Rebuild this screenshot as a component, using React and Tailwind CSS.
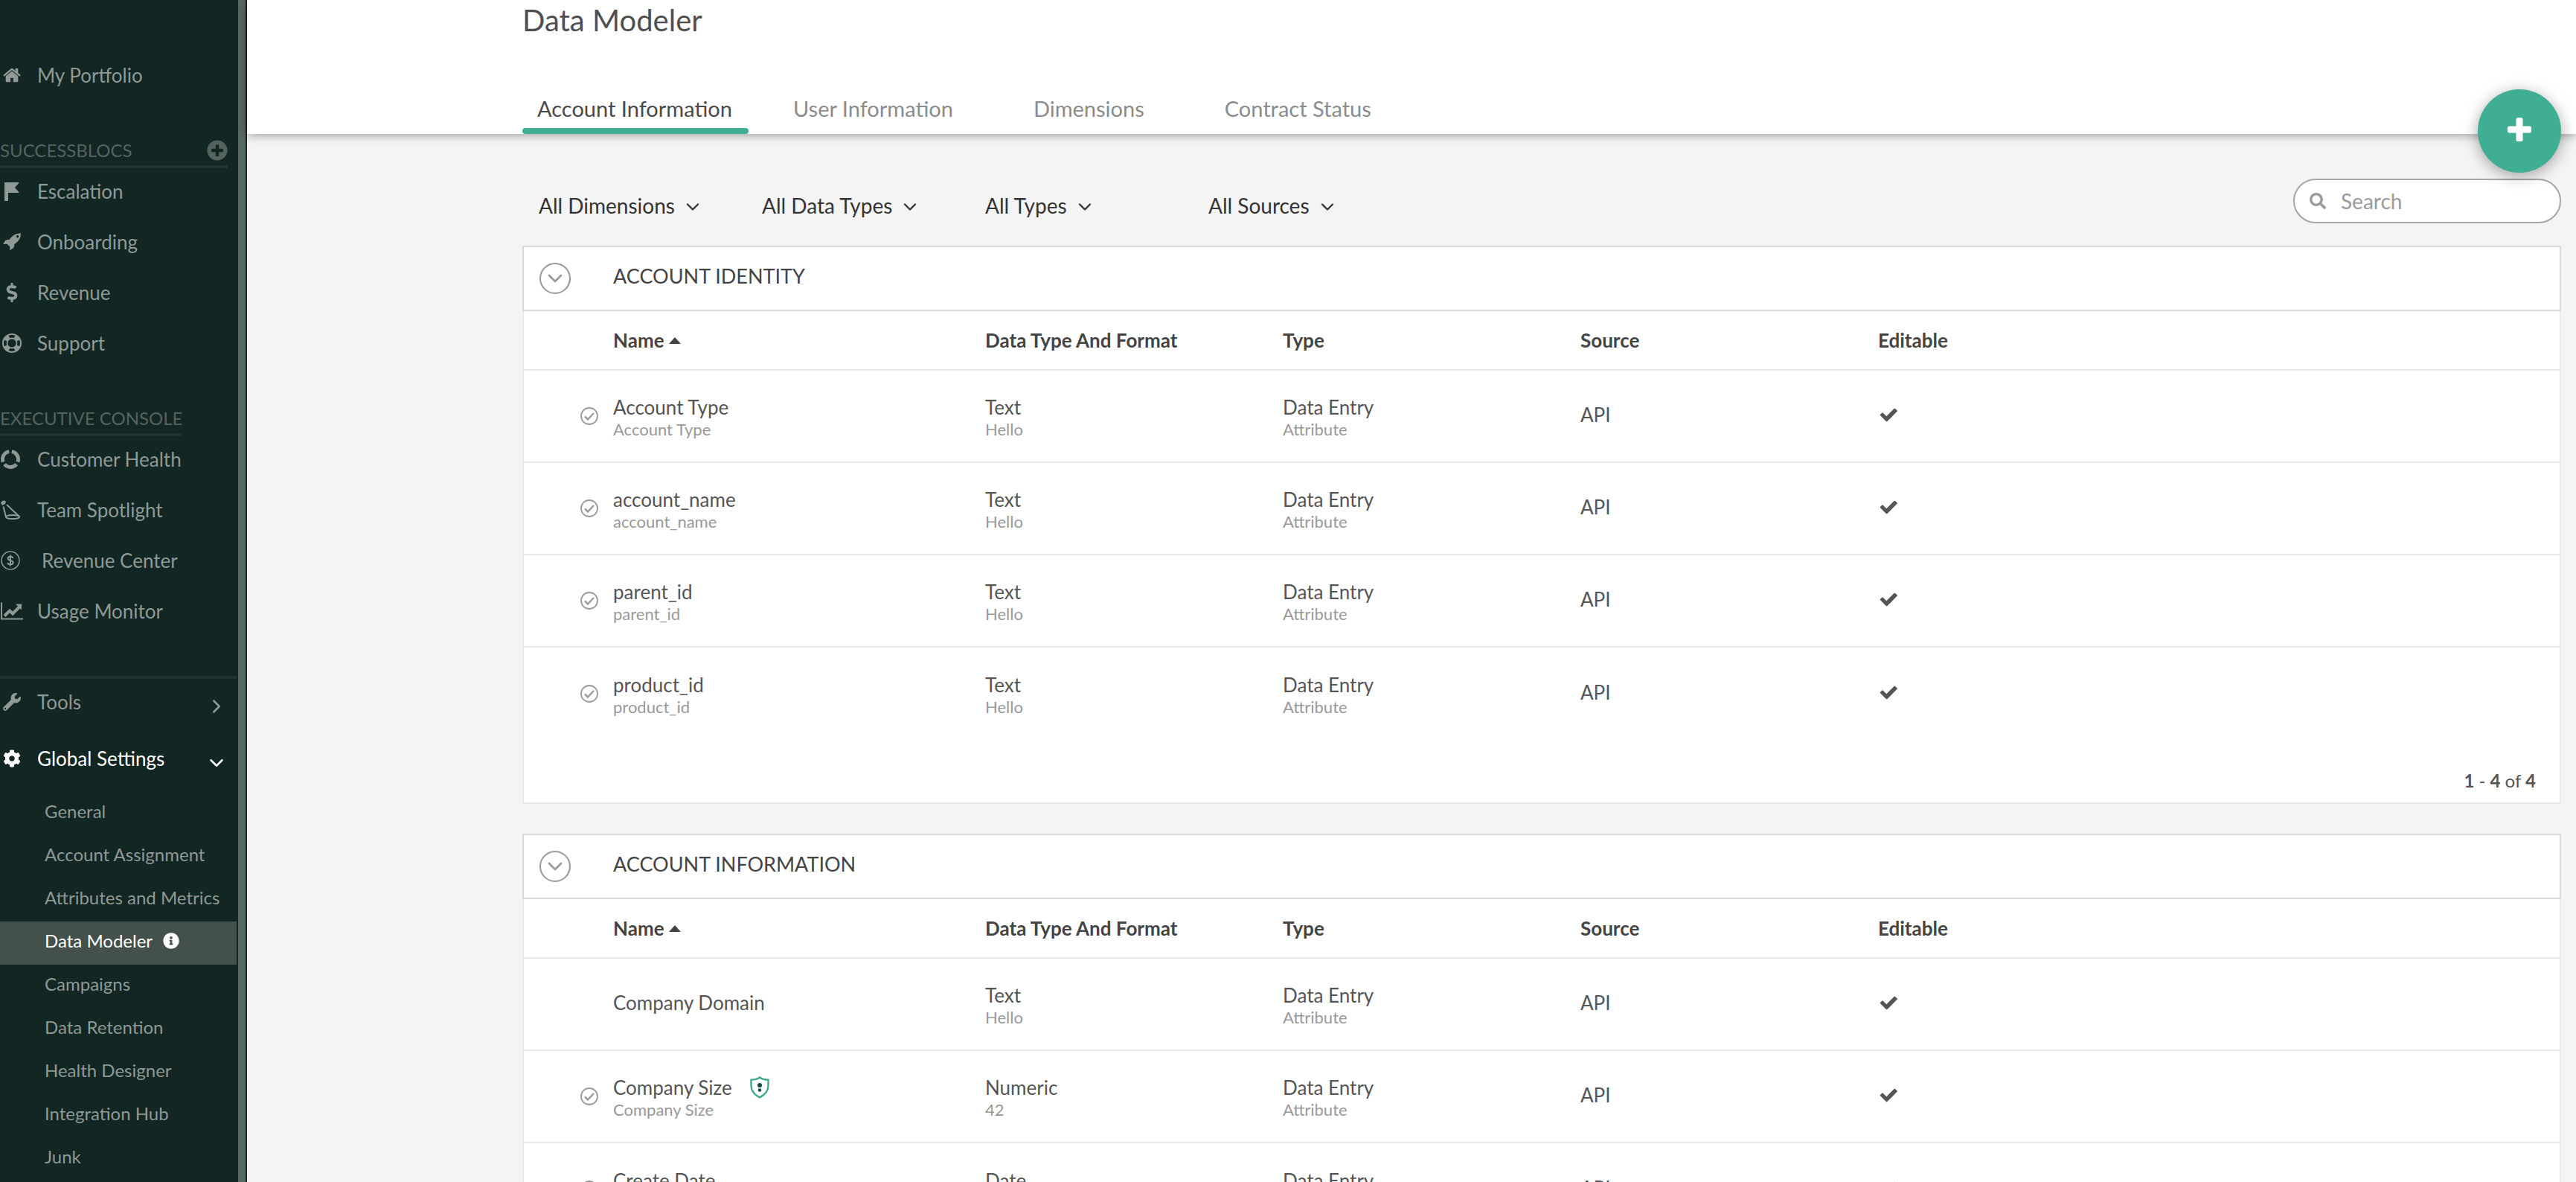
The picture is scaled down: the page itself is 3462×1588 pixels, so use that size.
import { FaDollarSign, FaWrench, FaCog, FaInfoCircle, FaPlusCircle, FaSearch } from 'react-icons/fa';
import { FiChevronDown, FiChevronRight } from 'react-icons/fi';

const HomeIcon = ({ className }) => (
    <svg viewBox="0 0 1664 1792" fill="currentColor" className={className}>
        <path d="M1408 992v480q0 26-19 45t-45 19h-384v-384h-256v384h-384q-26 0-45-19t-19-45v-480q0-1 .5-3t.5-3l575-474 575 474q1 2 1 6zm223-69l-62 74q-8 9-21 11h-3q-13 0-21-7l-692-577-692 577q-12 8-24 7-13-2-21-11l-62-74q-8-10-7-23.5t11-21.5l719-599q32-26 76-26t76 26l244 204v-195q0-14 9-23t23-9h192q14 0 23 9t9 23v408l219 182q10 8 11 21.5t-7 23.5z" />
    </svg>
);

const FlagIcon = ({ className }) => (
    <svg viewBox="0 0 24 26" fill="currentColor" className={className}>
        <path d="M2 1h20l-6 7 6 7H7v11H2z" />
    </svg>
);

const RocketIcon = ({ className }) => (
    <svg viewBox="0 0 24 24" fill="currentColor" className={className}>
        <path fillRule="evenodd" d="M24 .5C17 .3 12.500 3.500 8.500 9 6 8.800 4 9.300 2.800 10.500L0 15.300c2-.8 4-.8 5.800-.3.900 1 1.800 2 3 2.800.7 1.700.8 3.300.2 5.700l4.700-3c1.300-1.200 1.700-3 1.500-5.300C20.800 11.500 24 7.500 24 .5zM19.500 3a1.700 1.700 0 1 1 0 3.400 1.700 1.700 0 0 1 0-3.400z" />
    </svg>
);

const SupportIcon = ({ className }) => (
    <svg viewBox="0 0 26 26" fill="none" stroke="currentColor" className={className}>
        <circle cx="13" cy="13" r="12" strokeWidth="2" />
        <circle cx="13" cy="13" r="6.500" strokeWidth="1.800" />
        <circle cx="13" cy="13" r="9.200" strokeWidth="5" pathLength="360" strokeDasharray="44 46" transform="rotate(23 13 13)" />
    </svg>
);

const HealthIcon = ({ className }) => (
    <svg viewBox="0 0 26 26" fill="none" stroke="currentColor" strokeWidth="5" className={className}>
        <circle cx="13" cy="13" r="10.5" pathLength="360" strokeDasharray="100 20" transform="rotate(-80 13 13)" />
    </svg>
);

const SpotlightIcon = ({ className }) => (
    <svg viewBox="0 0 26 26" fill="none" stroke="currentColor" strokeWidth="2" className={className}>
        <path d="M0 4a4 4 0 0 1 7-2l-1 3-4 2z" fill="currentColor" stroke="none" />
        <path d="M3.5 8.5l3.5 14M8 6l17 16" />
        <ellipse cx="16" cy="22.5" rx="9" ry="2.6" />
    </svg>
);

const RevenueIcon = ({ className }) => (
    <svg viewBox="0 0 26 26" fill="none" stroke="currentColor" className={className}>
        <circle cx="13" cy="13" r="12" strokeWidth="1.6" />
        <path d="M16.5 9.8c-.5-1.300-1.800-2-3.500-2-2 0-3.400.9-3.400 2.500 0 3.600 7 1.700 7 5.400 0 1.600-1.500 2.600-3.600 2.600-1.900 0-3.200-.8-3.700-2.200M13 5.500v15" strokeWidth="2" />
    </svg>
);

const UsageIcon = ({ className }) => (
    <svg viewBox="0 0 30 23" fill="none" stroke="currentColor" className={className}>
        <path d="M1 0v22h29" strokeWidth="2" />
        <path d="M5 18l7-7 4 4 9-9" strokeWidth="4" />
        <path d="M20 2h8v8z" fill="currentColor" stroke="none" />
    </svg>
);

const PlusIcon = ({ className }) => (
    <svg viewBox="0 0 32 32" fill="currentColor" className={className}>
        <rect x="11.5" width="9" height="32" rx="2.5" />
        <rect y="11.5" width="32" height="9" rx="2.5" />
    </svg>
);

const CheckIcon = ({ className }) => (
    <svg viewBox="0 0 1792 1792" fill="currentColor" className={className}>
        <path d="M1671 566q0 28-20 48l-724 724-136 136q-20 20-48 20t-48-20l-136-136-362-362q-20-20-20-48t20-48l136-136q20-20 48-20t48 20l294 295 656-657q20-20 48-20t48 20l136 136q20 20 20 48z" />
    </svg>
);

const CheckCircleIcon = ({ className }) => (
    <svg viewBox="0 0 24 24" fill="none" stroke="currentColor" className={className}>
        <circle cx="12" cy="12" r="11" strokeWidth="1.8" />
        <path d="M6 12.500l4 4 8-8.500" strokeWidth="2.500" />
    </svg>
);

const ShieldIcon = ({ className }) => (
    <svg viewBox="0 0 26 30" fill="none" className={className}>
        <path d="M13 1.500c3 2.300 6.500 3.200 11.500 3.200v7.300c0 7.500-4.500 13-11.500 16.300C6 25 1.500 19.500 1.500 12V4.700C6.500 4.700 10 3.800 13 1.500z" stroke="#3fa98b" strokeWidth="2.400" />
        <circle cx="13" cy="12" r="3" fill="#1c4a40" />
        <circle cx="13" cy="18.500" r="2.300" fill="#1c4a40" />
    </svg>
);

const successblocs = [
    { label: 'Escalation', icon: FlagIcon, size: 'w-6 h-6.5' },
    { label: 'Onboarding', icon: RocketIcon, size: 'w-6 h-6' },
    { label: 'Revenue', icon: FaDollarSign, size: 'w-6 h-6.5' },
    { label: 'Support', icon: SupportIcon, size: 'w-6.5 h-6.5' },
];

const executive = [
    { label: 'Customer Health', icon: HealthIcon, size: 'w-6.5 h-6.5 mr-1' },
    { label: 'Team Spotlight', icon: SpotlightIcon, size: 'w-6.5 h-6.5 mr-1' },
    { label: 'Revenue Center', icon: RevenueIcon, size: 'w-6.5 h-6.5 mr-1', indent: true },
    { label: 'Usage Monitor', icon: UsageIcon, size: 'w-[30px] h-6' },
];

const settings = ['General', 'Account Assignment', 'Attributes and Metrics', 'Data Modeler', 'Campaigns', 'Data Retention', 'Health Designer', 'Integration Hub', 'Junk'];

const tabs = ['Account Information', 'User Information', 'Dimensions', 'Contract Status'];

const filters = ['All Dimensions', 'All Data Types', 'All Types', 'All Sources'];

const identityRows = [
    { name: 'Account Type', sub: 'Account Type', format: 'Text', sample: 'Hello' },
    { name: 'account_name', sub: 'account_name', format: 'Text', sample: 'Hello' },
    { name: 'parent_id', sub: 'parent_id', format: 'Text', sample: 'Hello' },
    { name: 'product_id', sub: 'product_id', format: 'Text', sample: 'Hello' },
];

const informationRows = [
    { name: 'Company Domain', format: 'Text', sample: 'Hello' },
    { name: 'Company Size', sub: 'Company Size', format: 'Numeric', sample: '42', secure: true },
    { name: 'Create Date', sub: 'Create Date', format: 'Date', sample: '01/01/2020' },
];

const NavItem = ({ item }) => {
    const Icon = item.icon;
    return (
        <a href="#" className="flex items-center h-8 text-[26px] leading-8">
            <span className={`flex justify-center w-8 shrink-0 ${item.indent ? 'mr-6' : 'mr-4.5'}`}>
                <Icon className={item.size} />
            </span>
            {item.label}
        </a>
    );
};

const Sidebar = () => (
    <aside className="w-[332px] shrink-0 bg-[#122623] border-r-2 border-[#122623] text-[#8f9996]">
        <nav className="min-h-full border-r-10 border-[#5a6865] pt-[85px]">
            <NavItem item={{ label: 'My Portfolio', icon: HomeIcon, size: 'w-6 h-6.5' }} />

            <div className="mt-[71px] mr-3.5 pb-1.5 border-b-4 border-[#1f332f] flex justify-between items-center text-[#55635f]">
                <h2 className="text-2xl leading-7">SUCCESSBLOCS</h2>
                <button aria-label="Add SuccessBloc"><FaPlusCircle className="w-7 h-7" /></button>
            </div>
            <div className="pt-[15px] flex flex-col gap-9">
                {successblocs.map((item) => <NavItem key={item.label} item={item} />)}
            </div>

            <h2 className="mt-[71px] pb-1.5 w-fit border-b-4 border-[#1f332f] text-2xl leading-7 text-[#55635f]">EXECUTIVE CONSOLE</h2>
            <div className="pt-[15px] flex flex-col gap-9">
                {executive.map((item) => <NavItem key={item.label} item={item} />)}
            </div>

            <div className="mt-[71px] mr-0.5 pt-[15px] pr-3 border-t-4 border-[#1f332f] flex flex-col gap-11">
                <div className="h-8 flex justify-between items-center">
                    <NavItem item={{ label: 'Tools', icon: FaWrench, size: 'w-6 h-6' }} />
                    <FiChevronRight className="w-[30px] h-[30px] mt-3" />
                </div>
                <div className="h-8 flex justify-between items-center text-white">
                    <NavItem item={{ label: 'Global Settings', icon: FaCog, size: 'w-6 h-6' }} />
                    <FiChevronDown className="w-[30px] h-[30px] mt-3" />
                </div>
            </div>
            <ul className="mt-[29px] mr-0.5">
                {settings.map((label) => (
                    <li key={label} className={label === 'Data Modeler' ? 'bg-[#43504c] text-white' : ''}>
                        <a href="#" className="flex items-center gap-3.5 pl-15 pt-[11px] pb-[17px] text-2xl leading-[30px]">
                            {label}
                            {label === 'Data Modeler' && <FaInfoCircle className="w-[22px] h-[22px]" />}
                        </a>
                    </li>
                ))}
            </ul>
        </nav>
    </aside>
);

const Header = () => (
    <header className="relative z-10 bg-white pl-[370px] pr-5 shadow-[0_2px_12px_rgba(0,0,0,0.35)]">
        <h1 className="pt-1 text-[40px] leading-[46px] text-[#4f4f4f]">Data Modeler</h1>
        <div className="mt-[66px] flex text-[29px] leading-[60px]">
            {tabs.map((tab, index) => (
                <button
                    key={tab}
                    className={index === 0
                        ? 'px-5 mr-2 text-[#4a4a4a]'
                        : 'px-[54px] text-[#8c8c8c]'}
                >
                    {tab}
                </button>
            ))}
        </div>
        <div className="w-[304px] h-2 -mt-1 rounded bg-[#3fae92]" />
        <button aria-label="Add attribute" className="absolute right-5 top-30 w-28 h-28 pb-1 rounded-full bg-[#3fae92] text-white flex justify-center items-center shadow-[0_4px_20px_rgba(0,0,0,0.35)]">
            <PlusIcon className="w-8 h-8" />
        </button>
    </header>
);

const Toolbar = () => (
    <div className="flex justify-between items-start pt-15 pb-[30px]">
        <div className="flex pl-[22px] pt-5">
            {filters.map((filter) => (
                <label key={filter} className="w-[300px] flex items-center gap-2.5 text-[28px] leading-8 text-[#333]">
                    <select aria-label={filter} className="appearance-none field-sizing-content">
                        <option>{filter}</option>
                    </select>
                    <FiChevronDown className="w-7 h-7 mt-1" />
                </label>
            ))}
        </div>
        <label className="w-[360px] h-15 px-5 flex items-center bg-white border-2 border-[#a6a6a6] rounded-full text-[28px]">
            <FaSearch className="w-5.5 h-5.5 mr-5 text-[#9b9b9b]" />
            <input type="search" placeholder="Search" aria-label="Search" className="min-w-0 flex-1 outline-none placeholder:text-[#9b9b9b]" />
        </label>
    </div>
);

const Section = ({ title, rows, footer }) => (
    <section className="mb-10">
        <div className="h-22 flex items-center bg-white border-2 border-[#d9d9d9] pl-[21px] text-[#444]">
            <button aria-label={`Collapse ${title}`} className="w-[42px] h-[42px] mr-[57px] flex justify-center items-center rounded-full border-2 border-[#999] text-[#999]">
                <FiChevronDown className="w-8 h-8" />
            </button>
            <h2 className="text-[27px] leading-8 pb-1.5">{title}</h2>
        </div>
        <div className="bg-white border-2 border-t-0 border-[#e8e8e8]">
            <table className="w-full table-fixed text-left text-[26px] leading-8 text-[#555]">
                <colgroup>
                    <col className="w-30" />
                    <col className="w-[500px]" />
                    <col className="w-[400px]" />
                    <col className="w-[400px]" />
                    <col className="w-[400px]" />
                    <col />
                </colgroup>
                <thead>
                    <tr className="h-[79px] border-b-2 border-[#e8e8e8] text-[#444]">
                        <th aria-label="Active" />
                        <th>
                            <span className="flex items-center gap-1.5">
                                Name
                                <svg viewBox="0 0 16 9" fill="currentColor" className="w-4 h-[9px]"><path d="M8 0l8 9H0z" /></svg>
                            </span>
                        </th>
                        <th>Data Type And Format</th>
                        <th>Type</th>
                        <th>Source</th>
                        <th>Editable</th>
                    </tr>
                </thead>
                <tbody>
                    {rows.map((row) => (
                        <tr key={row.name} className="h-31 border-b-2 border-[#e8e8e8] last:border-0">
                            <td>{row.sub && <CheckCircleIcon className="w-6 h-6 ml-auto mr-5 text-[#9b9b9b]" />}</td>
                            <td className={row.sub ? 'pt-1' : 'pb-1'}>
                                <div className="flex items-center gap-6">
                                    {row.name}
                                    {row.secure && <ShieldIcon className="w-6.5 h-7.5" />}
                                </div>
                                {row.sub && <div className="text-[22px] leading-7 text-[#999]">{row.sub}</div>}
                            </td>
                            <td className="pt-1">
                                {row.format}
                                <div className="text-[22px] leading-7 text-[#999]">{row.sample}</div>
                            </td>
                            <td className="pt-1">
                                Data Entry
                                <div className="text-[22px] leading-7 text-[#999]">Attribute</div>
                            </td>
                            <td className="pb-1">API</td>
                            <td className="pb-1"><CheckIcon className="w-7 h-7" /></td>
                        </tr>
                    ))}
                </tbody>
            </table>
            <p className="h-[85px] pt-10 pr-8 text-right text-2xl leading-8 text-[#555]">{footer}</p>
        </div>
    </section>
);

export default function App() {
    return (
        <div className="flex h-screen overflow-hidden bg-[#f4f4f4] font-['Lato',sans-serif]">
            <Sidebar />
            <main className="flex-1 min-w-0">
                <Header />
                <div className="pl-[370px] pr-5">
                    <Toolbar />
                    <Section title="ACCOUNT IDENTITY" rows={identityRows} footer={<><b>1</b> - <b>4</b> of <b>4</b></>} />
                    <Section title="ACCOUNT INFORMATION" rows={informationRows} footer={<><b>1</b> - <b>3</b> of <b>3</b></>} />
                </div>
            </main>
        </div>
    );
}
